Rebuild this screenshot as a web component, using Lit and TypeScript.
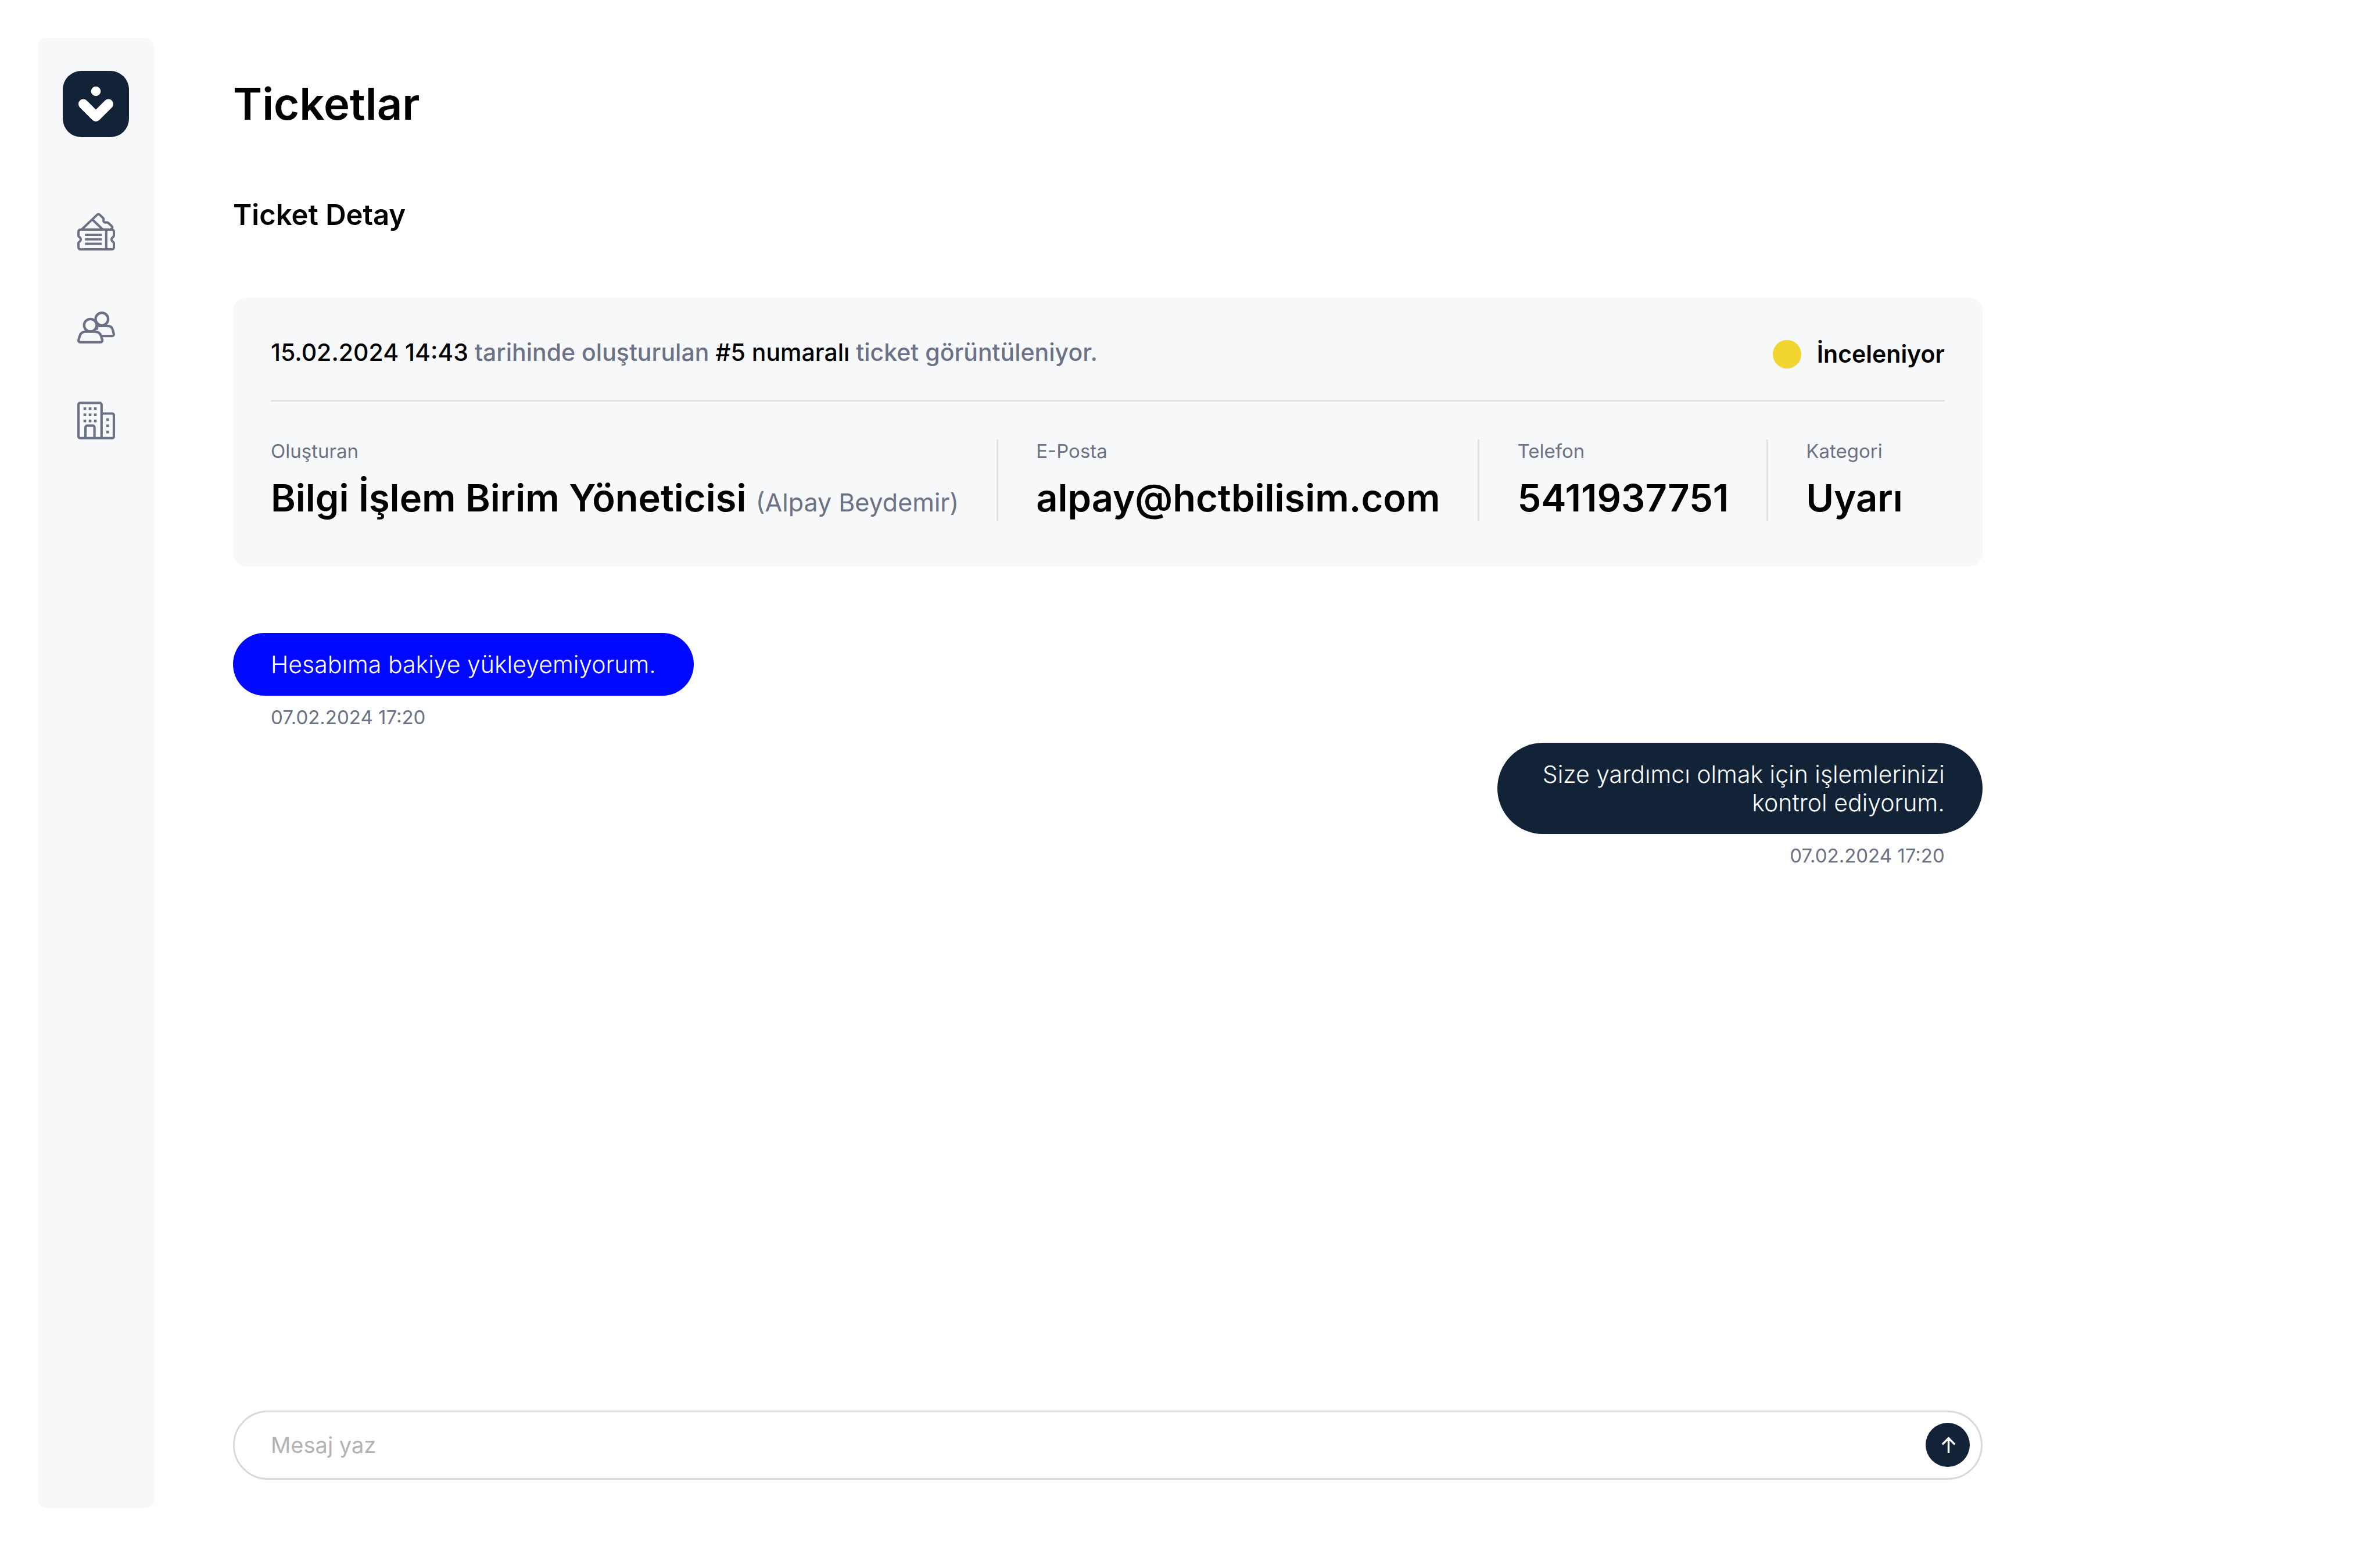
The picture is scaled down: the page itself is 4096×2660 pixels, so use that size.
import { LitElement, html, svg, css } from "lit";
import { customElement, property } from "lit/decorators.js";

interface Field {
  label: string;
  value: string;
  note?: string;
}

interface Message {
  text: string;
  time: string;
  own: boolean;
}

const ticketIcon = svg`
  <svg class="icon" width="65" height="65" viewBox="0 0 65 65" aria-hidden="true">
    <g fill="none" stroke="currentColor" stroke-width="4" stroke-linejoin="round">
      <path d="M5.500 29H59.500a3.500 3.500 0 0 1 3.500 3.500V39.600c0 1.200-.7 1.900-1.700 2.500a4.500 4.500 0 0 0 0 7.800c1 .6 1.700 1.300 1.700 2.500V59.500a3.500 3.500 0 0 1-3.500 3.500H5.500a3.500 3.500 0 0 1-3.500-3.500V52.400c0-1.200.7-1.900 1.700-2.500a4.500 4.500 0 0 0 0-7.800c-1-.6-1.700-1.300-1.700-2.500V32.500A3.500 3.500 0 0 1 5.500 29Z" />
      <path d="M49.800 29V63" />
      <path d="M13.300 38H42.300M13.300 45.800H42.300M13.300 53.400H42.300" />
      <path d="M8 28.500 34.300 3.400a3 3 0 0 1 4.200 0L44.600 9.300c1 1 .9 1.900.6 3.100-.8 3.100 1.200 5 4.200 4.300 1.800-.4 2.900-.3 4 .8L59.500 23.300c1.400 1.400 1 2.800-.2 3.900L57.600 28.600" />
      <path d="M26 11.700 43.500 28.500" />
    </g>
  </svg>`;

const usersIcon = svg`
  <svg class="icon" width="65" height="60" viewBox="0 -5 65 60" aria-hidden="true">
    <g fill="none" stroke="currentColor" stroke-width="4.300" stroke-linejoin="round">
      <circle cx="42.300" cy="13" r="10.800" />
      <path d="M34.800 25.200 33 31.500" />
      <path d="M35.500 24.800H52.300c4.700 0 7.700 2.500 8.700 6.700L62.700 38c.5 2.500-.8 4.200-3.200 4.200H43" />
      <circle cx="22.500" cy="23.600" r="10.800" />
      <path d="M14.800 34.600H30.200c5.200 0 9.300 2.800 10.800 7.500L42.900 48.500c.7 2.600-.8 4.400-3.300 4.400H5.600c-2.500 0-4-1.800-3.300-4.400L4.200 42.100C5.600 37.400 9.600 34.600 14.800 34.600Z" />
    </g>
  </svg>`;

const buildingIcon = svg`
  <svg class="icon" width="65" height="65" viewBox="0 0 65 65" aria-hidden="true">
    <g fill="none" stroke="currentColor" stroke-width="4.200" stroke-linejoin="round">
      <path d="M5 2.100H38.800a3 3 0 0 1 3 3V62.900H5a3 3 0 0 1-3-3V5.100A3 3 0 0 1 5 2.100Z" />
      <path d="M41.800 20.500H60a3 3 0 0 1 3 3V59.900a3 3 0 0 1-3 3H41.800" />
      <path d="M14.100 62.900V44.400a3 3 0 0 1 3-3H26.600a3 3 0 0 1 3 3V62.900" />
    </g>
    <g fill="currentColor">
      ${[12, 22.7, 33.3].map((y) =>
        [13, 22, 31].map(
          (x) => svg`<rect x=${x - 2.3} y=${y - 2.3} width="4.600" height="4.600" />`
        )
      )}
      ${[31, 41.7, 52.3].map(
        (y) => svg`<rect x="50" y=${y - 2.3} width="4.600" height="4.600" />`
      )}
    </g>
  </svg>`;

@customElement("side-nav")
export class SideNav extends LitElement {
  static styles = css`
    :host {
      display: flex;
      flex-direction: column;
      align-items: center;
      gap: 130px;
      padding: 57px 0;
      border-radius: 16px;
      background: #f7f8fa;
    }
    .logo,
    .logo svg,
    .link,
    .icon {
      display: block;
    }
    .menu {
      display: flex;
      flex-direction: column;
      gap: 100px;
      margin: 0;
      padding: 0;
      list-style: none;
    }
    .link {
      color: #6b7285;
    }
  `;

  render() {
    return html`
      <a class="logo" href="#" aria-label="Ana sayfa">
        <svg width="114" height="114" viewBox="0 0 114 114" aria-hidden="true">
          <rect width="114" height="114" rx="32" fill="#122338" />
          <circle cx="57" cy="35" r="8.300" fill="#fff" />
          <path d="M35.400 57 57 78.500 78.600 57" fill="none" stroke="#fff" stroke-width="16.800" stroke-linecap="round" stroke-linejoin="round" />
        </svg>
      </a>
      <nav>
        <ul class="menu">
          <li><a class="link" href="#ticketlar" aria-label="Ticketlar">${ticketIcon}</a></li>
          <li><a class="link" href="#kullanicilar" aria-label="Kullanıcılar">${usersIcon}</a></li>
          <li><a class="link" href="#firmalar" aria-label="Firmalar">${buildingIcon}</a></li>
        </ul>
      </nav>
    `;
  }
}

@customElement("ticket-card")
export class TicketCard extends LitElement {
  @property({ attribute: false }) fields: Field[] = [];

  static styles = css`
    :host {
      display: block;
      padding: 65px 65px 79px;
      border-radius: 24px;
      background: #f7f8fa;
    }
    .top {
      display: flex;
      justify-content: space-between;
      align-items: flex-start;
      padding-bottom: 46px;
      border-bottom: 3px solid #e0e2e4;
      font-size: 41px;
    }
    .summary {
      margin: 0;
      line-height: 58px;
      font-weight: 500;
      color: #6b7285;
    }
    .strong {
      font-weight: 500;
      color: #000;
    }
    .status {
      display: flex;
      align-items: center;
      gap: 27px;
      line-height: 65px;
      font-weight: 600;
    }
    .dot {
      width: 49px;
      height: 49px;
      border-radius: 50%;
      background: #f2d531;
    }
    .fields {
      display: flex;
      margin: 65px 0 0;
    }
    .field {
      display: flex;
      flex-direction: column;
      gap: 22px;
      padding-right: 65px;
    }
    .field + .field {
      padding-left: 65px;
      border-left: 3px solid #e0e2e4;
    }
    .field:last-child {
      padding-right: 0;
    }
    .label {
      font-size: 33px;
      line-height: 40px;
      color: #6b7285;
    }
    .value {
      margin: 0;
      font-size: 65px;
      line-height: 78px;
      font-weight: 600;
      white-space: nowrap;
    }
    .note {
      font-size: 43px;
      line-height: 43px;
      font-weight: 400;
      color: #6b7285;
    }
  `;

  render() {
    return html`
      <div class="top">
        <p class="summary">
          <span class="strong">15.02.2024 14:43</span> tarihinde oluşturulan
          <span class="strong">#5 numaralı</span> ticket görüntüleniyor.
        </p>
        <div class="status"><span class="dot"></span>İnceleniyor</div>
      </div>
      <dl class="fields">
        ${this.fields.map(
          (f) => html`
            <div class="field">
              <dt class="label">${f.label}</dt>
              <dd class="value">
                ${f.value}
                ${f.note ? html`<span class="note">(${f.note})</span>` : ""}
              </dd>
            </div>
          `
        )}
      </dl>
    `;
  }
}

@customElement("message-list")
export class MessageList extends LitElement {
  @property({ attribute: false }) messages: Message[] = [];

  static styles = css`
    :host {
      display: block;
    }
    .list {
      display: flex;
      flex-direction: column;
      gap: 24px;
      margin: 0;
      padding: 0;
      list-style: none;
    }
    .item {
      display: flex;
      flex-direction: column;
      align-items: flex-start;
      gap: 17px;
    }
    .own {
      align-items: flex-end;
      text-align: right;
    }
    .bubble {
      box-sizing: border-box;
      max-width: 835px;
      margin: 0;
      padding: 30px 65px 29px;
      border-radius: 80px;
      background: #0008ff;
      color: #fff;
      font-size: 41px;
      line-height: 49px;
      font-weight: 300;
    }
    .own .bubble {
      background: #122338;
    }
    .time {
      padding: 0 65px;
      font-size: 33px;
      line-height: 40px;
      color: #6b7285;
    }
  `;

  render() {
    return html`
      <ol class="list">
        ${this.messages.map(
          (m) => html`
            <li class="item ${m.own ? "own" : ""}">
              <p class="bubble">${m.text}</p>
              <time class="time">${m.time}</time>
            </li>
          `
        )}
      </ol>
    `;
  }
}

@customElement("message-composer")
export class MessageComposer extends LitElement {
  static styles = css`
    :host {
      display: block;
    }
    .form {
      display: flex;
      align-items: center;
      padding: 18px 19px 19px 62px;
      border: 3px solid #d9d9d9;
      border-radius: 60px;
      background: #fff;
    }
    .input {
      flex: 1;
      min-width: 0;
      height: 60px;
      padding: 0;
      border: 0;
      outline: 0;
      background: none;
      color: #000;
      font: inherit;
      font-size: 38px;
    }
    .input::placeholder {
      color: #b3b3b3;
      opacity: 1;
    }
    .send {
      width: 76px;
      height: 76px;
      padding: 0;
      border: 0;
      border-radius: 50%;
      background: #122338;
      color: #fff;
      cursor: pointer;
    }
    .send svg {
      display: block;
    }
  `;

  render() {
    return html`
      <form class="form" @submit=${(e: Event) => e.preventDefault()}>
        <input class="input" type="text" placeholder="Mesaj yaz" aria-label="Mesaj yaz" />
        <button class="send" type="submit" aria-label="Gönder">
          <svg width="76" height="76" viewBox="0 0 76 76" aria-hidden="true">
            <path d="M39.500 52V26.500M28.800 37.200 39.500 26.500 50.200 37.200" fill="none" stroke="currentColor" stroke-width="3.400" />
          </svg>
        </button>
      </form>
    `;
  }
}

@customElement("app-root")
export class AppRoot extends LitElement {
  static styles = css`
    :host {
      display: grid;
      grid-template-columns: 336px minmax(0, 22fr) minmax(0, 5fr);
      box-sizing: border-box;
      min-height: 100vh;
      padding: 65px 0 65px 65px;
      background: #fff;
      color: #000;
      font-family: Inter, "Liberation Sans", sans-serif;
    }
    .sidebar {
      margin-right: 136px;
    }
    .main {
      display: flex;
      flex-direction: column;
      padding: 67px 0 49px;
    }
    .page-title {
      margin: 0;
      font-size: 76px;
      line-height: 92px;
      font-weight: 600;
    }
    .section-title {
      margin: 116px 0 112px;
      font-size: 49px;
      line-height: 60px;
      font-weight: 600;
    }
    .messages {
      margin: 114px 0;
    }
    .composer {
      margin-top: auto;
    }
  `;

  private fields: Field[] = [
    { label: "Oluşturan", value: "Bilgi İşlem Birim Yöneticisi", note: "Alpay Beydemir" },
    { label: "E-Posta", value: "alpay@hctbilisim.com" },
    { label: "Telefon", value: "5411937751" },
    { label: "Kategori", value: "Uyarı" },
  ];

  private messages: Message[] = [
    { text: "Hesabıma bakiye yükleyemiyorum.", time: "07.02.2024 17:20", own: false },
    { text: "Size yardımcı olmak için işlemlerinizi kontrol ediyorum.", time: "07.02.2024 17:20", own: true },
  ];

  render() {
    return html`
      <side-nav class="sidebar"></side-nav>
      <main class="main">
        <h1 class="page-title">Ticketlar</h1>
        <h2 class="section-title">Ticket Detay</h2>
        <ticket-card .fields=${this.fields}></ticket-card>
        <message-list class="messages" .messages=${this.messages}></message-list>
        <message-composer class="composer"></message-composer>
      </main>
    `;
  }
}
